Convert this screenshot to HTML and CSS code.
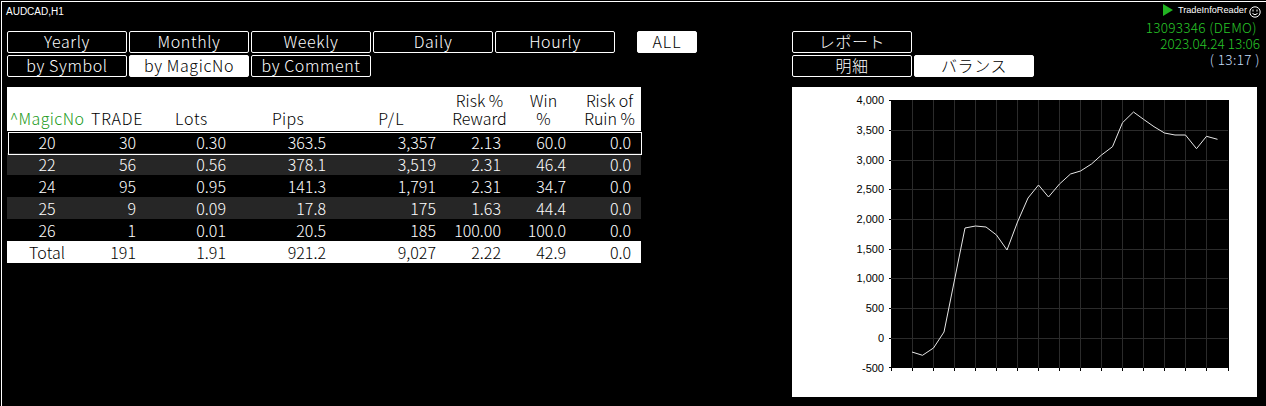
FILE: index.html
```html
<!DOCTYPE html>
<html lang="ja">
  <head>
    <meta charset="UTF-8" />
    <title>TradeInfoReader</title>
    <link rel="stylesheet" href="styles.css">
  </head>
  <body>
    <main class="terminal">
      <div class="symbol">AUDCAD,H1</div>

      <div class="status">
        <div class="status__brand">
          <svg class="status__play" width="10" height="12" viewBox="0 0 10 12"><path d="M0 0 L10 6 L0 12 Z" fill="#22b422"/></svg>
          <span class="status__name">TradeInfoReader</span>
          <svg class="status__smile" width="12" height="12" viewBox="0 0 12 12" fill="none" stroke="#fff"><circle cx="6" cy="6" r="5.2"/><path d="M3.5 7.5 Q6 10 8.500 7.500"/><path d="M4 3.500 v2 M8 3.500 v2"/></svg>
        </div>
        <div class="status__row status__row--green status__row--wide">13093346 (DEMO)&nbsp;</div>
        <div class="status__row status__row--green">2023.04.24 13:06</div>
        <div class="status__row status__row--time">( 13:17 )</div>
      </div>

      <div class="panels">
        <section class="left">
          <div class="btn-rows">
            <div class="btn-row">
              <button class="btn">Yearly</button>
              <button class="btn">Monthly</button>
              <button class="btn">Weekly</button>
              <button class="btn">Daily</button>
              <button class="btn">Hourly</button>
              <button class="btn btn--short btn--on">ALL</button>
            </div>
            <div class="btn-row">
              <button class="btn">by Symbol</button>
              <button class="btn btn--on">by MagicNo</button>
              <button class="btn">by Comment</button>
            </div>
          </div>

          <table class="stats">
            <thead>
              <tr>
                <th class="col-magic">^MagicNo</th>
                <th class="col-trade">TRADE</th>
                <th class="col-lots">Lots</th>
                <th class="col-pips">Pips</th>
                <th class="col-pl">P/L</th>
                <th class="col-reward">Risk %<br />Reward</th>
                <th class="col-win">Win<br />%</th>
                <th class="col-ruin">Risk of<br />Ruin %</th>
              </tr>
            </thead>
            <tbody>
              <tr class="is-selected"><td>20</td><td>30</td><td>0.30</td><td>363.5</td><td>3,357</td><td>2.13</td><td>60.0</td><td>0.0</td></tr>
              <tr class="is-alt"><td>22</td><td>56</td><td>0.56</td><td>378.1</td><td>3,519</td><td>2.31</td><td>46.4</td><td>0.0</td></tr>
              <tr><td>24</td><td>95</td><td>0.95</td><td>141.3</td><td>1,791</td><td>2.31</td><td>34.7</td><td>0.0</td></tr>
              <tr class="is-alt"><td>25</td><td>9</td><td>0.09</td><td>17.8</td><td>175</td><td>1.63</td><td>44.4</td><td>0.0</td></tr>
              <tr><td>26</td><td>1</td><td>0.01</td><td>20.5</td><td>185</td><td>100.00</td><td>100.0</td><td>0.0</td></tr>
              <tr class="is-total"><td>Total</td><td>191</td><td>1.91</td><td>921.2</td><td>9,027</td><td>2.22</td><td>42.9</td><td>0.0</td></tr>
            </tbody>
          </table>
        </section>

        <section class="right">
          <div class="btn-rows">
            <div class="btn-row">
              <button class="btn">レポート</button>
            </div>
            <div class="btn-row">
              <button class="btn">明細</button>
              <button class="btn btn--on">バランス</button>
            </div>
          </div>

          <div class="chart">
            <svg class="chart__svg" width="465" height="310" viewBox="792 87 465 310">
              <rect x="891" y="100" width="338" height="268" fill="#000"/>
              <g stroke="#2b2b2b" fill="none">
                <path d="M891 130.500H1228M891 160.500H1228M891 189.500H1228M891 219.500H1228M891 249.500H1228M891 278.500H1228M891 308.500H1228M891 338.500H1228"/>
                <path d="M912.500 100V368M933.500 100V368M954.500 100V368M975.500 100V368M996.500 100V368M1017.500 100V368M1038.500 100V368M1059.500 100V368M1080.500 100V368M1101.500 100V368M1122.500 100V368M1143.500 100V368M1164.500 100V368M1185.500 100V368M1206.500 100V368"/>
              </g>
              <g stroke="#000" fill="none">
                <path d="M889 100.500H891M889 130.500H891M889 160.500H891M889 189.500H891M889 219.500H891M889 249.500H891M889 278.500H891M889 308.500H891M889 338.500H891M889 367.500H891"/>
                <path d="M891.500 368V371M912.500 368V371M933.500 368V371M954.500 368V371M975.500 368V371M996.500 368V371M1017.500 368V371M1038.500 368V371M1059.500 368V371M1080.500 368V371M1101.500 368V371M1122.500 368V371M1143.500 368V371M1164.500 368V371M1185.500 368V371M1206.500 368V371M1228.500 368V371"/>
              </g>
              <polyline fill="none" stroke="#e6e6e6" points="912,352 922.500,355.300 933.500,348 944,332 954.500,280 965,228 975.500,226 986,227 996.500,235 1007,250 1017.500,222 1028,198 1038.500,185 1048.500,197 1059.500,184 1070.500,174 1080.500,171 1091.500,164 1101.500,155 1112.500,146.700 1122.500,122.700 1133.500,112 1143.500,119.300 1154,126.700 1164.500,133 1175,135 1185.500,135 1196.500,148.700 1206.500,136.300 1217.500,139.300"/>
              <g class="chart__labels" text-anchor="end">
                <text x="884" y="104">4,000</text>
                <text x="884" y="134">3,500</text>
                <text x="884" y="164">3,000</text>
                <text x="884" y="193">2,500</text>
                <text x="884" y="223">2,000</text>
                <text x="884" y="253">1,500</text>
                <text x="884" y="282">1,000</text>
                <text x="884" y="312">500</text>
                <text x="884" y="342">0</text>
                <text x="884" y="372">-500</text>
              </g>
            </svg>
          </div>
        </section>
      </div>
    </main>
  </body>
</html>
```

FILE: styles.css
```css
* {
  margin: 0;
  padding: 0;
  box-sizing: border-box;
}

body {
  background-color: #000;
  font-family: "Noto Sans CJK JP", sans-serif;
  font-weight: 300;
  font-size: 16px;
  color: #fff;
}

.terminal {
  position: relative;
  width: 1265px;
  height: 405px;
  margin: 1px 0 0 1px;
  border-top: 1px solid #fff;
  border-left: 1px solid #fff;
  padding: 29px 0 0 5px;
  overflow: hidden;
}

.symbol {
  position: absolute;
  top: 3px;
  left: 4px;
  font-family: "Liberation Sans", sans-serif;
  font-weight: 400;
  font-size: 10px;
  line-height: 14px;
}

.status {
  position: absolute;
  top: 1px;
  right: 6px;
  text-align: right;
  font-size: 13.5px;
  line-height: 16px;
  color: #c4dcf8;
}

.status__brand {
  display: flex;
  justify-content: flex-end;
  align-items: center;
  gap: 2px;
  height: 16px;
  margin-right: -1px;
  font-family: "Liberation Sans", sans-serif;
  font-weight: 400;
  font-size: 9.2px;
  color: #fff;
}

.status__play {
  margin-right: 3px;
  margin-top: -3px;
}

.status__name {
  margin-bottom: 2px;
}

.status__smile {
  margin-top: 2px;
}

.status__row--green {
  color: #28c428;
}

.status__row--wide {
  letter-spacing: 0.3px;
}

.status__row--time {
  letter-spacing: 0.4px;
}

.panels {
  display: flex;
  gap: 95px;
}

.left {
  width: 690px;
}

.right {
  width: 465px;
}

.btn-rows {
  display: flex;
  flex-direction: column;
  gap: 2px;
  margin-bottom: 10px;
}

.btn-row {
  display: flex;
  gap: 2px;
}

.btn {
  width: 120px;
  height: 22px;
  padding-bottom: 3px;
  border: 1px solid #fff;
  border-radius: 2px;
  background-color: #000;
  color: #fff;
  font-family: inherit;
  font-weight: 300;
  font-size: 16px;
  line-height: 18px;
  letter-spacing: 0.6px;
}

.btn--short {
  width: 60px;
  margin-left: 20px;
  letter-spacing: 1px;
}

.btn--on {
  background-color: #fff;
  color: #000;
}

.stats {
  width: 634px;
  border-collapse: collapse;
  table-layout: fixed;
  line-height: 22px;
}

.stats th {
  height: 44px;
  vertical-align: bottom;
  background-color: #fff;
  color: #000;
  font-weight: 300;
  line-height: 18px;
  text-align: right;
  padding-bottom: 4px;
}

.stats .col-magic { width: 80px; text-align: center; color: #1a9a1a; letter-spacing: 0.4px; }
.stats .col-trade { width: 59px; padding-right: 3px; letter-spacing: 0.7px; }
.stats .col-lots { width: 90px; padding-right: 28px; letter-spacing: 0.7px; }
.stats .col-pips { width: 100px; padding-right: 32px; letter-spacing: 0.3px; }
.stats .col-pl { width: 110px; padding-right: 41px; letter-spacing: 1.3px; }
.stats .col-reward { width: 65px; padding-left: 2px; text-align: center; }
.stats .col-win { width: 65px; text-align: center; }
.stats .col-ruin { width: 65px; padding-left: 2px; text-align: center; }

.stats td {
  height: 22px;
  padding-right: 10px;
  text-align: right;
}

.stats td:first-child {
  position: relative;
  padding-right: 0;
  text-align: center;
}

/* frame of the selected row, laid over its cells */
.is-selected td:first-child::after {
  content: '';
  position: absolute;
  top: 1px;
  left: 1px;
  width: 632px;
  height: 21px;
  border: 1px solid #fff;
}

.is-alt {
  background-color: #262626;
}

.is-total {
  background-color: #fff;
  color: #000;
}

.chart {
  width: 465px;
  height: 310px;
  background-color: #fff;
}

.chart__svg {
  display: block;
}

.chart__labels {
  font-family: "Liberation Sans", sans-serif;
  font-size: 11px;
  fill: #000;
}
```
